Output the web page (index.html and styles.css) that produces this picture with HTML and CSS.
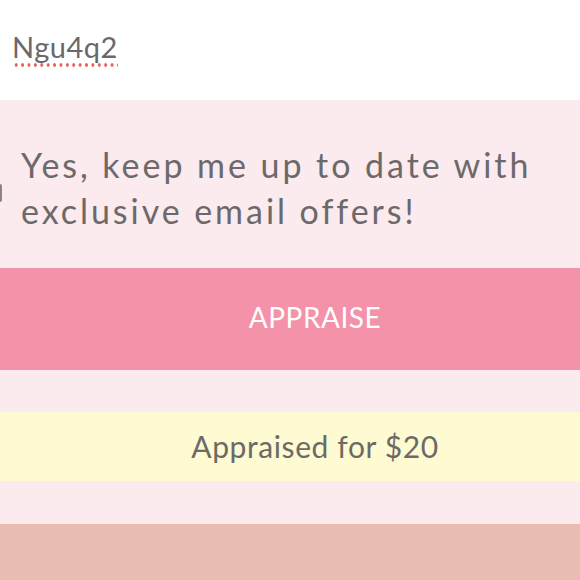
FILE: index.html
```html
<!DOCTYPE html>
<html>
<head>
<meta charset="utf-8">
<link rel="stylesheet" href="styles.css">
</head>
<body>
<div class="page">
  <header class="top">
    <span class="code">Ngu4q2</span>
  </header>
  <section class="optin">
    <span class="check"></span>
    <p class="optin-text">Yes, keep me up to date with exclusive email offers!</p>
  </section>
  <div class="btn">APPRAISE</div>
  <div class="spacer"></div>
  <div class="result">Appraised for $20</div>
  <div class="spacer spacer-b"></div>
  <div class="footer"></div>
</div>
</body>
</html>
```

FILE: styles.css
```css
* { box-sizing: border-box; }
html, body { margin: 0; padding: 0; }
body {
  width: 580px;
  height: 580px;
  overflow: hidden;
  font-family: "Lato", "Liberation Sans", sans-serif;
  background: #fff;
}
.page { display: flex; flex-direction: column; }
.top {
  height: 100px;
  background: #fff;
  padding: 30px 0 0 12px;
}
.code {
  display: inline-block;
  font-size: 29px;
  line-height: 34px;
  color: #6b6869;
  letter-spacing: 0.5px;
  padding-bottom: 3px;
  background-image: radial-gradient(circle, #e2625f 1.5px, transparent 1.9px);
  background-size: 6.4px 4px;
  background-repeat: repeat-x;
  background-position: 1px 100%;
}
.optin {
  position: relative;
  height: 168px;
  background: #fbeaee;
  padding: 42px 0 0 21px;
}
.check {
  position: absolute;
  left: -3px;
  top: 84px;
  width: 5px;
  height: 18px;
  border-radius: 2px;
  background: #8a8587;
}
.optin-text {
  margin: 0;
  font-size: 34px;
  line-height: 46px;
  letter-spacing: 2.95px;
  color: #6c696a;
  width: 559px;
}
.btn {
  height: 102px;
  background: #f392a8;
  color: #fff;
  font-size: 28px;
  display: flex;
  align-items: center;
  justify-content: center;
  padding-left: 50px;
  padding-bottom: 4px;
  letter-spacing: 0.5px;
}
.spacer { height: 42px; background: #fbeaee; }
.spacer-b { height: 43px; }
.result {
  height: 69px;
  background: #fefad2;
  color: #6c6a66;
  font-size: 30px;
  display: flex;
  align-items: center;
  justify-content: center;
  padding-left: 50px;
  padding-bottom: 2px;
  letter-spacing: 0.6px;
}
.footer { height: 56px; background: #eabbb0; }
```
